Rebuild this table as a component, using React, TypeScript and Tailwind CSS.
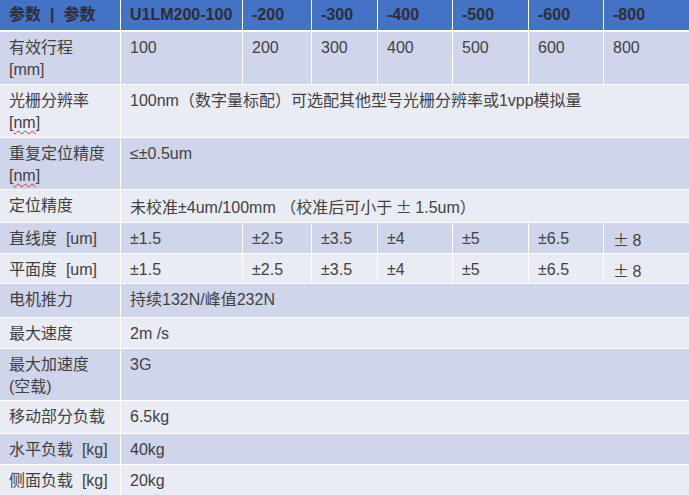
import type { ReactNode } from "react";

const cols = "grid grid-cols-[120px_121px_68px_65px_74px_75px_74px_1fr] gap-px";

type Row = {
  label: ReactNode;
  h: string;
  cells?: string[];
  span?: ReactNode;
};

const Squiggle = ({ children }: { children: ReactNode }) => (
  <span className="underline decoration-wavy decoration-red-500 decoration-1 underline-offset-2">{children}</span>
);

const Pm = ({ children }: { children: ReactNode }) => (
  <span className="font-['Noto_Sans_CJK_SC',sans-serif]">{children}</span>
);

const rows: Row[] = [
  {
    label: (
      <>
        有效行程
        <br />
        [mm]
      </>
    ),
    h: "h-[52px]",
    cells: ["100", "200", "300", "400", "500", "600", "800"],
  },
  {
    label: (
      <>
        光栅分辨率
        <br />[<Squiggle>nm</Squiggle>]
      </>
    ),
    h: "h-[52px]",
    span: "100nm（数字量标配）可选配其他型号光栅分辨率或1vpp模拟量",
  },
  {
    label: (
      <>
        重复定位精度
        <br />[<Squiggle>nm</Squiggle>]
      </>
    ),
    h: "h-[51px]",
    span: "≤±0.5um",
  },
  {
    label: "定位精度",
    h: "h-[32px]",
    span: (
      <>
        未校准±4um/100mm （校准后可小于<Pm> ± </Pm>1.5um）
      </>
    ),
  },
  {
    label: "直线度\u00a0 [um]",
    h: "h-[30px]",
    cells: ["±1.5", "±2.5", "±3.5", "±4", "±5", "±6.5", "PM8"],
  },
  {
    label: "平面度\u00a0 [um]",
    h: "h-[29px]",
    cells: ["±1.5", "±2.5", "±3.5", "±4", "±5", "±6.5", "PM8"],
  },
  { label: "电机推力", h: "h-[33px]", span: "持续132N/峰值232N" },
  { label: "最大速度", h: "h-[30px]", span: "2m /s" },
  {
    label: (
      <>
        最大加速度
        <br />
        (空载)
      </>
    ),
    h: "h-[51px]",
    span: "3G",
  },
  { label: "移动部分负载", h: "h-[32px]", span: "6.5kg" },
  { label: "水平负载\u00a0 [kg]", h: "h-[30px]", span: "40kg" },
  { label: "侧面负载\u00a0 [kg]", h: "h-[30px]", span: "20kg" },
];

const header: ReactNode[] = [
  <>
    参数<span className="mx-[9px]">|</span>参数
  </>,
  "U1LM200-100",
  "-200",
  "-300",
  "-400",
  "-500",
  "-600",
  "-800",
];

export default function App() {
  return (
    <div className="w-[689px] h-[495px] overflow-hidden bg-white font-['Liberation_Sans','Noto_Sans_CJK_SC',sans-serif] text-[16px] leading-[22px] text-[#424242]">
      <div className="flex flex-col gap-px">
        {/* 表头 */}
        <div className={`${cols} h-[30px] mb-px`}>
          {header.map((h, i) => (
            <div key={i} className="bg-[#4472c4] pl-[9px] flex items-center font-bold text-[#2e2e38] whitespace-nowrap">
              {h}
            </div>
          ))}
        </div>

        {rows.map((r, i) => {
          const bg = i % 2 === 0 ? "bg-[#cfd5ea]" : "bg-[#e9ebf5]";
          return (
            <div key={i} className={`${cols} ${r.h}`}>
              <div className={`${bg} pl-[9px] pt-[5px] whitespace-nowrap`}>{r.label}</div>
              {r.span ? (
                <div className={`${bg} col-span-7 pl-[9px] pt-[5px] whitespace-nowrap`}>{r.span}</div>
              ) : (
                r.cells?.map((c, j) => (
                  <div key={j} className={`${bg} pl-[9px] pt-[5px] whitespace-nowrap`}>
                    {c === "PM8" ? (
                      <>
                        <Pm>± </Pm>8
                      </>
                    ) : (
                      c
                    )}
                  </div>
                ))
              )}
            </div>
          );
        })}
      </div>
    </div>
  );
}
